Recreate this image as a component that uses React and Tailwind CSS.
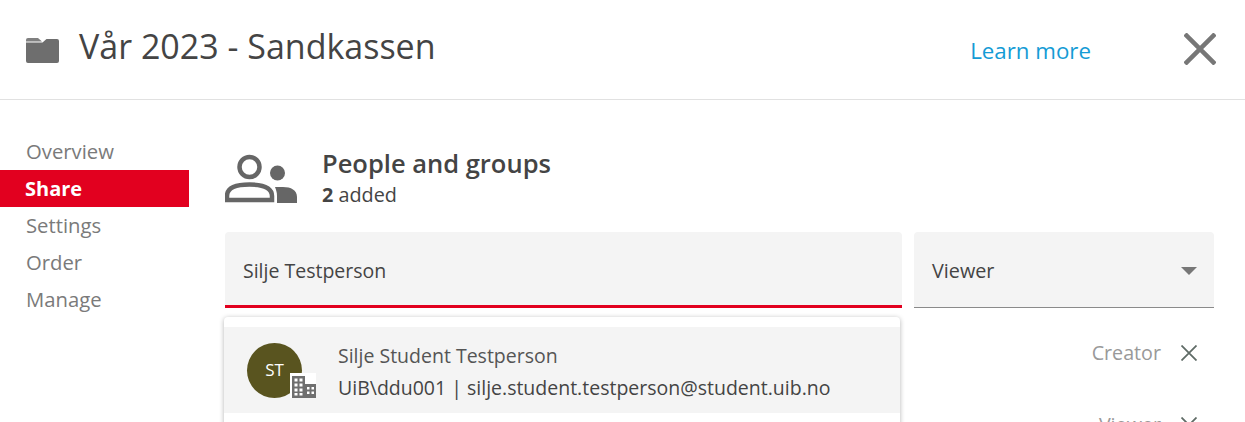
const FONT = { fontFamily: '"Open Sans", "Noto Sans", sans-serif' }

const NAV = ['Overview', 'Share', 'Settings', 'Order', 'Manage']

function FolderIcon() {
  return (
    <svg width="33" height="27" viewBox="0 0 33 27" className="shrink-0">
      <path d="M0 4a2 2 0 0 1 2-2h10l4 3.500H0z" fill="#808080" />
      <path d="M0 6.500h16.500l4-3.500H31a2 2 0 0 1 2 2v20a2 2 0 0 1-2 2H2a2 2 0 0 1-2-2z" fill="#6e6e6e" />
    </svg>
  )
}

function PeopleIcon() {
  return (
    <svg width="72" height="49" viewBox="0 0 72 49" className="shrink-0">
      <circle cx="24.500" cy="13" r="10" fill="none" stroke="#666" strokeWidth="4.500" />
      <path d="M2 46v-4c0-8 8-11.500 22.500-11.500S47 34 47 42v4z" fill="none" stroke="#666" strokeWidth="4.500" />
      <circle cx="52.500" cy="19" r="7.500" fill="#666" />
      <path d="M50 33h8c8 0 14 3 14 10v6H52v-7c0-4-1-6-2-9z" fill="#666" />
    </svg>
  )
}

function BuildingIcon() {
  return (
    <svg width="24" height="22" viewBox="0 0 24 22" className="block">
      <path d="M0 0h13v8h11v14H0z" fill="#6f6f6f" />
      <g fill="#fff">
        <rect x="2.500" y="2.500" width="3" height="3" />
        <rect x="7.500" y="2.500" width="3" height="3" />
        <rect x="2.500" y="7.500" width="3" height="3" />
        <rect x="7.500" y="7.500" width="3" height="3" />
        <rect x="2.500" y="12.500" width="3" height="3" />
        <rect x="7.500" y="12.500" width="3" height="3" />
        <rect x="2.500" y="17" width="3" height="2.500" />
        <rect x="7.500" y="17" width="3" height="2.500" />
        <rect x="15" y="11" width="2.500" height="2.500" />
        <rect x="19.500" y="11" width="2.500" height="2.500" />
        <rect x="15" y="15.500" width="2.500" height="2.500" />
        <rect x="19.500" y="15.500" width="2.500" height="2.500" />
      </g>
    </svg>
  )
}

function CloseIcon({ size, stroke, width }) {
  return (
    <svg width={size} height={size} viewBox="0 0 32 32">
      <path d="M1 1l30 30M31 1L1 31" fill="none" stroke={stroke} strokeWidth={width} />
    </svg>
  )
}

function Member({ role }) {
  return (
    <div className="h-[72px] flex items-center justify-end pr-[17px]">
      <span className="text-[19.700px] text-[#999] mr-[20px]">{role}</span>
      <CloseIcon size={16} stroke="#5f6b66" width={3.500} />
    </div>
  )
}

export default function App() {
  return (
    <div className="w-[1245px] h-[422px] overflow-hidden bg-white text-[#444]" style={FONT}>
      <header className="h-[100px] border-b border-[#e1e1e1] flex items-center pl-[26px] pr-[29px]">
        <FolderIcon />
        <h1 className="ml-[20px] text-[34px] font-normal text-[#444] -mt-[6px]">Vår 2023 - Sandkassen</h1>
        <a className="ml-auto text-[22.300px] text-[#149bd5] mt-[2px]">Learn more</a>
        <button className="ml-[93px] -mt-[2px]">
          <CloseIcon size={32} stroke="#777" width={4.500} />
        </button>
      </header>

      <div className="flex">
        <nav className="w-[189px] pt-[33px] shrink-0">
          {NAV.map((item) =>
            item === 'Share' ? (
              <div key={item} className="h-[37px] bg-[#e2001f] text-white font-bold text-[20px] leading-[37px] pl-[25px]">
                {item}
              </div>
            ) : (
              <div key={item} className="h-[37px] text-[#7a7a7a] text-[20.300px] leading-[37px] pl-[26px]">
                {item}
              </div>
            )
          )}
        </nav>

        <main className="relative w-[989px] ml-[36px] pt-[54px]">
          <div className="flex items-center h-[49px]">
            <PeopleIcon />
            <div className="ml-[25px]">
              <h2 className="text-[25.500px] leading-[32px] font-semibold text-[#444] -mt-[1px]">People and groups</h2>
              <p className="text-[19.800px] leading-[28px] mt-[2px] text-[#444]">
                <strong className="font-bold">2</strong> added
              </p>
            </div>
          </div>

          <div className="flex gap-[12px] mt-[29px]">
            <div className="w-[677px] h-[76px] rounded-t bg-[#f4f4f4] border-b-[3px] border-[#e2001f] flex items-center pl-[18px] pt-[5px] text-[19.500px] text-[#444]">
              Silje Testperson
            </div>
            <div className="w-[300px] h-[76px] rounded-t bg-[#f4f4f4] border-b border-[#8a8a8a] flex items-center justify-between pl-[18px] pr-[17px] pt-[2px] text-[19.800px] text-[#444]">
              Viewer
              <span className="w-0 h-0 border-x-[8px] border-x-transparent border-t-[8px] border-t-[#777]" />
            </div>
          </div>

          <div className="mt-[9px]">
            <Member role="Creator" />
            <Member role="Viewer" />
          </div>

          <div className="absolute left-[-1px] top-[217px] w-[676px] rounded pt-[10px] pb-[40px] bg-white shadow-[0_1px_5px_rgba(0,0,0,0.3)]">
            <div className="h-[86px] bg-[#f4f4f4] flex items-center pl-[23px]">
              <div className="relative w-[55px] h-[55px] rounded-full bg-[#59541f] text-white text-[17px] flex items-center justify-center">
                ST
                <span className="absolute left-[43px] top-[30px] bg-white pl-[2px] pt-[3px]">
                  <BuildingIcon />
                </span>
              </div>
              <div className="ml-[36px] pt-[4px]">
                <div className="text-[19.500px] leading-[32px] text-[#555]">Silje Student Testperson</div>
                <div className="text-[19.500px] leading-[32px] text-[#444]">UiB\ddu001 | silje.student.testperson@student.uib.no</div>
              </div>
            </div>
          </div>
        </main>
      </div>
    </div>
  )
}
